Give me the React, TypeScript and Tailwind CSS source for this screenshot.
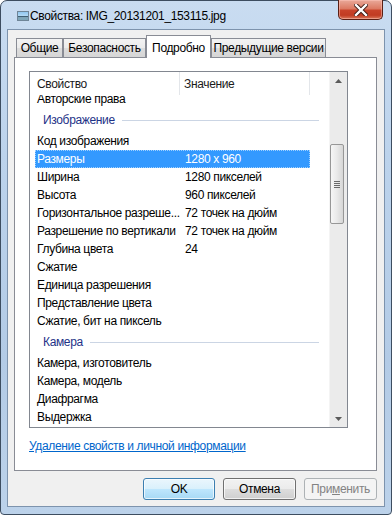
import React from "react";

const font = { fontFamily: '"Liberation Sans", Arial, sans-serif' };

type Row =
  | { kind: "item"; name: string; value?: string; selected?: boolean }
  | { kind: "group"; name: string };

const rows: Row[] = [
  { kind: "item", name: "Авторские права" },
  { kind: "group", name: "Изображение" },
  { kind: "item", name: "Код изображения" },
  { kind: "item", name: "Размеры", value: "1280 x 960", selected: true },
  { kind: "item", name: "Ширина", value: "1280 пикселей" },
  { kind: "item", name: "Высота", value: "960 пикселей" },
  { kind: "item", name: "Горизонтальное разреше...", value: "72 точек на дюйм" },
  { kind: "item", name: "Разрешение по вертикали", value: "72 точек на дюйм" },
  { kind: "item", name: "Глубина цвета", value: "24" },
  { kind: "item", name: "Сжатие" },
  { kind: "item", name: "Единица разрешения" },
  { kind: "item", name: "Представление цвета" },
  { kind: "item", name: "Сжатие, бит на пиксель" },
  { kind: "group", name: "Камера" },
  { kind: "item", name: "Камера, изготовитель" },
  { kind: "item", name: "Камера, модель" },
  { kind: "item", name: "Диафрагма" },
  { kind: "item", name: "Выдержка" },
];

function TitleIcon() {
  return (
    <svg width="12" height="10" viewBox="0 0 12 10" className="block">
      <defs>
        <linearGradient id="sky" x1="0" y1="0" x2="0" y2="1">
          <stop offset="0" stopColor="#8cc4ee" />
          <stop offset="1" stopColor="#d9eefb" />
        </linearGradient>
      </defs>
      <rect x="0.5" y="0.5" width="11" height="9" fill="url(#sky)" stroke="#6f8597" />
      <rect x="1" y="5" width="10" height="1.5" fill="#3f5f73" />
      <rect x="1" y="6.5" width="10" height="2.5" fill="#7fa6b8" />
    </svg>
  );
}

function CloseButton() {
  return (
    <div className="absolute top-[-1px] right-[8px] w-[45px] h-[20px] rounded-b-[5px] border border-t-0 border-[#5a1f14] overflow-hidden flex items-center justify-center bg-[linear-gradient(180deg,#e9a99a_0%,#dc7a63_45%,#c8432a_55%,#c13b22_80%,#d9785a_100%)] shadow-[inset_0_0_0_1px_rgba(255,200,190,0.5)]">
      <svg width="14" height="12" viewBox="0 0 14 12">
        <path d="M2 1 L12 11 M12 1 L2 11" stroke="#3c1a14" strokeWidth="4.2" strokeLinecap="square" />
        <path d="M2 1 L12 11 M12 1 L2 11" stroke="#ffffff" strokeWidth="2.4" strokeLinecap="square" />
      </svg>
    </div>
  );
}

function UpArrow() {
  return (
    <svg width="7" height="4" viewBox="0 0 7 4">
      <polygon points="0,4 3.5,0 7,4" fill="#5a5a5a" />
    </svg>
  );
}
function DownArrow() {
  return (
    <svg width="7" height="4" viewBox="0 0 7 4">
      <polygon points="0,0 7,0 3.5,4" fill="#5a5a5a" />
    </svg>
  );
}

function Scrollbar() {
  return (
    <div className="w-[18px] h-full flex flex-col bg-[#ebebeb] border-l border-[#f4f4f4]">
      <div className="h-[17px] flex items-center justify-center">
        <UpArrow />
      </div>
      <div className="flex-1 relative">
        <div className="mt-[55px] w-[14px] h-[80px] rounded-[2px] border border-[#979797] bg-[linear-gradient(90deg,#f6f6f6_0%,#e9e9e9_50%,#d6d6d6_100%)] flex items-center justify-center">
          <div className="flex flex-col gap-[1px]">
            <div className="w-[6px] h-px bg-[#6a6a6a]" />
            <div className="w-[6px] h-px bg-[#6a6a6a]" />
            <div className="w-[6px] h-px bg-[#6a6a6a]" />
            <div className="w-[6px] h-px bg-[#6a6a6a]" />
          </div>
        </div>
      </div>
      <div className="h-[17px] flex items-center justify-center">
        <DownArrow />
      </div>
    </div>
  );
}

function ListRow({ row }: { row: Row }) {
  if (row.kind === "group") {
    return (
      <div className="h-[24px] flex items-center pl-[13px] pr-[10px]">
        <span className="text-[12px] text-[#1e3287] whitespace-nowrap">{row.name}</span>
        <div className="flex-1 h-px bg-[#cbd5e4] ml-[7px]" />
      </div>
    );
  }
  return (
    <div className="h-[18px] pl-[5px]">
      <div
        className={
          row.selected
            ? "w-[275px] h-[18px] flex items-center bg-[#3399ff] text-white outline outline-1 outline-dotted outline-[#9fd0ff] -outline-offset-1"
            : "w-[275px] h-[18px] flex items-center text-black"
        }
      >
        <div className="w-[145px] shrink-0 pl-[2px] text-[12px] whitespace-nowrap overflow-hidden">{row.name}</div>
        <div className="pl-[5px] text-[12px] whitespace-nowrap">{row.value ?? ""}</div>
      </div>
    </div>
  );
}

function ListBox() {
  return (
    <div className="w-[319px] h-[357px] border border-[#828790] bg-white flex">
      <div className="w-[299px] h-full flex flex-col">
        <div className="h-[23px] flex shrink-0 bg-white relative z-10">
          <div className="w-[150px] h-full flex items-center pl-[7px] text-[12px] text-[#1a1a1a] border-r border-[#e3e6ea]">Свойство</div>
          <div className="w-[130px] h-full flex items-center pl-[4px] text-[12px] text-[#1a1a1a] border-r border-[#e3e6ea]">Значение</div>
          <div className="flex-1" />
        </div>
        <div className="flex-1 overflow-hidden">
          <div className="mt-[-5px]">
            {rows.map((r, i) => (
              <ListRow key={i} row={r} />
            ))}
          </div>
        </div>
      </div>
      <Scrollbar />
    </div>
  );
}

function Tab({ label, w, selected }: { label: string; w: string; selected?: boolean }) {
  if (selected) {
    return (
      <div className={`${w} h-[23px] mb-[-1px] relative z-10 bg-white border border-b-0 border-[#898c95] flex items-start justify-center pt-[3px] text-[12px] text-black whitespace-nowrap`}>
        {label}
      </div>
    );
  }
  return (
    <div className={`${w} h-[19px] border border-b-0 border-[#898c95] bg-[linear-gradient(180deg,#f3f3f3_0%,#ebebeb_50%,#dddddd_51%,#d6d6d6_100%)] flex items-center justify-center text-[12px] text-black whitespace-nowrap`}>
      {label}
    </div>
  );
}

export default function App() {
  return (
    <div className="w-[392px] h-[515px] bg-white tracking-[-0.35px]" style={font}>
      <div className="relative w-[392px] h-[515px] rounded-t-[7px] rounded-b-[4px] border border-[#3d4d60] bg-[linear-gradient(180deg,#c9dcf1_0%,#bcd3ec_30%,#b3cbe6_70%,#bcd2ea_100%)] flex flex-col px-[6px] pb-[7px]">
        <div className="h-[28px] flex items-center pt-[2px] shrink-0">
          <div className="ml-[10px]">
            <TitleIcon />
          </div>
          <span className="ml-[1px] text-[12px] text-black">Свойства: IMG_20131201_153115.jpg</span>
        </div>
        <CloseButton />
        <div className="flex-1 border border-[#7d93ad] bg-[#f0f0f0] flex flex-col">
          <div className="pl-[6px] pt-[5px]">
            <div className="h-[22px] flex items-end pl-[2px]">
              <Tab label="Общие" w="w-[47px]" />
              <Tab label="Безопасность" w="w-[83px]" />
              <Tab label="Подробно" w="w-[65px]" selected />
              <Tab label="Предыдущие версии" w="w-[115px]" />
            </div>
            <div className="w-[363px] h-[414px] border border-[#898c95] bg-white pl-[14px] pt-[13px] flex flex-col">
              <ListBox />
              <div className="mt-[10px] h-[16px] flex items-center">
                <span className="text-[12px] text-[#0066cc] underline">Удаление свойств и личной информации</span>
              </div>
            </div>
          </div>
          <div className="mt-[7px] pr-[7px] flex justify-end gap-[8px]">
            <div className="w-[72px] h-[22px] rounded-[3px] border border-[#3c7fb1] bg-[linear-gradient(180deg,#eaf6fd_0%,#d9f0fc_50%,#bee6fd_51%,#a7d9f5_100%)] shadow-[inset_0_0_0_1px_rgba(255,255,255,0.7)] flex items-center justify-center text-[12px] text-black">
              OK
            </div>
            <div className="w-[73px] h-[22px] rounded-[3px] border border-[#707070] bg-[linear-gradient(180deg,#f2f2f2_0%,#ebebeb_50%,#dddddd_51%,#cfcfcf_100%)] shadow-[inset_0_0_0_1px_rgba(255,255,255,0.7)] flex items-center justify-center text-[12px] text-black">
              Отмена
            </div>
            <div className="w-[73px] h-[22px] rounded-[3px] border border-[#adb2b5] bg-[#f4f4f4] flex items-center justify-center text-[12px] text-[#838383]">
              <span>При<span className="underline">м</span>енить</span>
            </div>
          </div>
        </div>
      </div>
    </div>
  );
}
